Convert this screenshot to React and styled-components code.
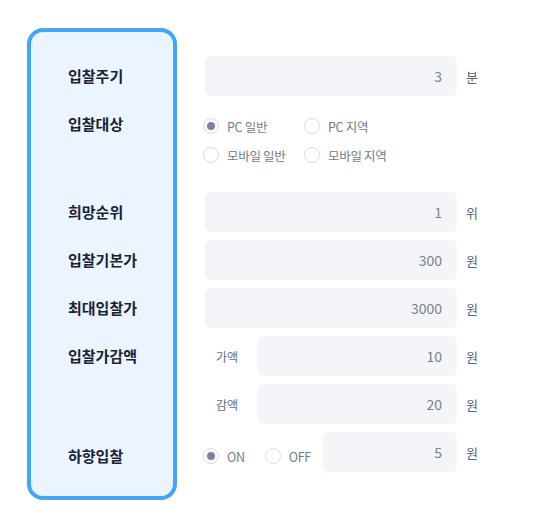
import styled, { createGlobalStyle } from 'styled-components';

const GlobalStyle = createGlobalStyle`
  body {
    margin: 0;
    background: #fff;
    font-family: "Noto Sans CJK KR", "Noto Sans", sans-serif;
  }
`;

function Radio({ checked, label }) {
  return (
    <RadioItem>
      <RadioCircle checked={checked} />
      <RadioText>{label}</RadioText>
    </RadioItem>
  );
}

function NumberField({ value, unit }) {
  return (
    <>
      <Input>{value}</Input>
      <Unit>{unit}</Unit>
    </>
  );
}

function App() {
  return (
    <Page>
      <GlobalStyle />
      <LabelPanel>
        <Label>입찰주기</Label>
        <Label size={80}>입찰대상</Label>
        <Label>희망순위</Label>
        <Label>입찰기본가</Label>
        <Label>최대입찰가</Label>
        <Label>입찰가감액</Label>
        <Label />
        <Label offset={4}>하향입찰</Label>
      </LabelPanel>

      <Controls>
        <Field>
          <NumberField value="3" unit="분" />
        </Field>

        <RadioGrid>
          <Radio checked label="PC 일반" />
          <Radio label="PC 지역" />
          <Radio label="모바일 일반" />
          <Radio label="모바일 지역" />
        </RadioGrid>

        <Field>
          <NumberField value="1" unit="위" />
        </Field>
        <Field>
          <NumberField value="300" unit="원" />
        </Field>
        <Field>
          <NumberField value="3000" unit="원" />
        </Field>

        <Field>
          <SubLabel>가액</SubLabel>
          <NumberField value="10" unit="원" />
        </Field>
        <Field>
          <SubLabel>감액</SubLabel>
          <NumberField value="20" unit="원" />
        </Field>

        <Field>
          <ToggleGroup>
            <Radio checked label="ON" />
            <Radio label="OFF" />
          </ToggleGroup>
          <NumberField value="5" unit="원" />
        </Field>
      </Controls>
    </Page>
  );
}

export default App;

const Page = styled.div`
  display: flex;
  align-items: flex-start;
  gap: 28px;
  padding: 28px 0 0 27px;
`;

const LabelPanel = styled.div`
  width: 150px;
  box-sizing: border-box;
  display: flex;
  flex-direction: column;
  gap: 8px;
  padding: 24px 0 24px 37px;
  border: 4px solid #42a5f5;
  border-radius: 16px;
  background: #ebf5ff;
`;

const Label = styled.div`
  height: ${(p) => p.size || 40}px;
  font-size: 15px;
  font-weight: 700;
  color: #1b2236;
  line-height: 40px;
  margin-top: ${(p) => p.offset || 0}px;
  margin-bottom: ${(p) => -(p.offset || 0)}px;
`;

const Controls = styled.div`
  width: 275px;
  display: flex;
  flex-direction: column;
  gap: 8px;
  padding-top: 28px;
`;

const Field = styled.div`
  display: flex;
  align-items: center;
  height: 40px;
`;

const Input = styled.div`
  flex: 1;
  height: 40px;
  box-sizing: border-box;
  padding-right: 15px;
  border-radius: 6px;
  background: #f4f5f9;
  color: #7a8092;
  font-size: 14px;
  line-height: 40px;
  text-align: right;
`;

const Unit = styled.span`
  width: 14px;
  margin-left: 9px;
  font-size: 13px;
  color: #5c6273;
`;

const SubLabel = styled.span`
  width: 44px;
  margin-right: 8px;
  text-align: center;
  font-size: 12px;
  color: #666c7e;
`;

const RadioGrid = styled.div`
  display: grid;
  grid-template-columns: 101px auto;
  grid-auto-rows: 20px;
  row-gap: 9px;
  align-content: start;
  height: 80px;
  box-sizing: border-box;
  padding-top: 12px;
  margin-left: -2px;
`;

const ToggleGroup = styled.div`
  display: flex;
  align-items: center;
  gap: 20px;
  margin-left: -2px;
  margin-right: 12px;
  margin-top: 8px;
`;

const RadioItem = styled.label`
  display: flex;
  align-items: center;
  gap: 8px;
`;

const RadioCircle = styled.span`
  position: relative;
  width: 16px;
  height: 16px;
  box-sizing: border-box;
  border: 1px solid #d7dbe6;
  border-radius: 50%;
  background: #fff;

  &::after {
    content: '';
    display: ${(p) => (p.checked ? 'block' : 'none')};
    position: absolute;
    top: 3px;
    left: 3px;
    width: 8px;
    height: 8px;
    border-radius: 50%;
    background: #7c8397;
  }
`;

const RadioText = styled.span`
  font-size: 12.5px;
  color: #737989;
  letter-spacing: -0.3px;
`;
